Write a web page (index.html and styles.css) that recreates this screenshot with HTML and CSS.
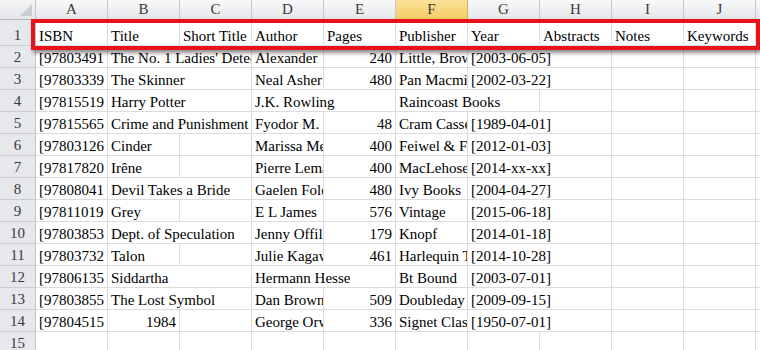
FILE: index.html
```html
<!DOCTYPE html>
<html>
<head>
<meta charset="utf-8">
<link rel="stylesheet" href="styles.css">
</head>
<body>
<div class="sheet">
  <div class="corner"><span class="tri"></span></div>
  <div class="ch">A</div><div class="ch">B</div><div class="ch">C</div><div class="ch">D</div><div class="ch">E</div><div class="ch sel">F</div><div class="ch">G</div><div class="ch">H</div><div class="ch">I</div><div class="ch">J</div><div class="ch"></div>

  <div class="rh">1</div>
  <div class="c">ISBN</div><div class="c">Title</div><div class="c">Short Title</div><div class="c">Author</div><div class="c">Pages</div><div class="c">Publisher</div><div class="c">Year</div><div class="c">Abstracts</div><div class="c">Notes</div><div class="c">Keywords</div><div class="c"></div>

  <div class="rh">2</div>
  <div class="c">[97803491</div><div class="c s2">The No. 1 Ladies' Detective Agency</div><div class="c">Alexander</div><div class="c num">240</div><div class="c">Little, Brown</div><div class="c s2">[2003-06-05]</div><div class="c"></div><div class="c"></div><div class="c"></div>

  <div class="rh">3</div>
  <div class="c">[97803339</div><div class="c s2">The Skinner</div><div class="c">Neal Asher</div><div class="c num">480</div><div class="c">Pan Macmillan</div><div class="c s2">[2002-03-22]</div><div class="c"></div><div class="c"></div><div class="c"></div>

  <div class="rh">4</div>
  <div class="c">[97815519</div><div class="c s2">Harry Potter</div><div class="c s2">J.K. Rowling</div><div class="c s2">Raincoast Books</div><div class="c"></div><div class="c"></div><div class="c"></div><div class="c"></div>

  <div class="rh">5</div>
  <div class="c">[97815565</div><div class="c s2">Crime and Punishment</div><div class="c">Fyodor M.</div><div class="c num">48</div><div class="c">Cram Cassettes</div><div class="c s2">[1989-04-01]</div><div class="c"></div><div class="c"></div><div class="c"></div>

  <div class="rh">6</div>
  <div class="c">[97803126</div><div class="c">Cinder</div><div class="c"></div><div class="c">Marissa Meyer</div><div class="c num">400</div><div class="c">Feiwel &amp; Friends</div><div class="c s2">[2012-01-03]</div><div class="c"></div><div class="c"></div><div class="c"></div>

  <div class="rh">7</div>
  <div class="c">[97817820</div><div class="c">Irêne</div><div class="c"></div><div class="c">Pierre Lemaitre</div><div class="c num">400</div><div class="c">MacLehose Press</div><div class="c s2">[2014-xx-xx]</div><div class="c"></div><div class="c"></div><div class="c"></div>

  <div class="rh">8</div>
  <div class="c">[97808041</div><div class="c s2">Devil Takes a Bride</div><div class="c">Gaelen Foley</div><div class="c num">480</div><div class="c">Ivy Books</div><div class="c s2">[2004-04-27]</div><div class="c"></div><div class="c"></div><div class="c"></div>

  <div class="rh">9</div>
  <div class="c">[97811019</div><div class="c">Grey</div><div class="c"></div><div class="c">E L James</div><div class="c num">576</div><div class="c">Vintage</div><div class="c s2">[2015-06-18]</div><div class="c"></div><div class="c"></div><div class="c"></div>

  <div class="rh">10</div>
  <div class="c">[97803853</div><div class="c s2">Dept. of Speculation</div><div class="c">Jenny Offill</div><div class="c num">179</div><div class="c">Knopf</div><div class="c s2">[2014-01-18]</div><div class="c"></div><div class="c"></div><div class="c"></div>

  <div class="rh">11</div>
  <div class="c">[97803732</div><div class="c">Talon</div><div class="c"></div><div class="c">Julie Kagawa</div><div class="c num">461</div><div class="c">Harlequin Teen</div><div class="c s2">[2014-10-28]</div><div class="c"></div><div class="c"></div><div class="c"></div>

  <div class="rh">12</div>
  <div class="c">[97806135</div><div class="c s2">Siddartha</div><div class="c s2">Hermann Hesse</div><div class="c">Bt Bound</div><div class="c s2">[2003-07-01]</div><div class="c"></div><div class="c"></div><div class="c"></div>

  <div class="rh">13</div>
  <div class="c">[97803855</div><div class="c s2">The Lost Symbol</div><div class="c">Dan Brown</div><div class="c num">509</div><div class="c">Doubleday</div><div class="c s2">[2009-09-15]</div><div class="c"></div><div class="c"></div><div class="c"></div>

  <div class="rh">14</div>
  <div class="c">[97804515</div><div class="c num">1984</div><div class="c"></div><div class="c">George Orwell</div><div class="c num">336</div><div class="c">Signet Classics</div><div class="c s2">[1950-07-01]</div><div class="c"></div><div class="c"></div><div class="c"></div>

  <div class="rh">15</div>
  <div class="c"></div><div class="c"></div><div class="c"></div><div class="c"></div><div class="c"></div><div class="c"></div><div class="c"></div><div class="c"></div><div class="c"></div><div class="c"></div><div class="c"></div>

  <div class="highlight"></div>
</div>
</body>
</html>
```

FILE: styles.css
```css
html, body {
  margin: 0;
  padding: 0;
  background: #ffffff;
  overflow: hidden;
}

.sheet {
  position: relative;
  width: 760px;
  height: 350px;
  overflow: hidden;
  display: grid;
  grid-template-columns: 36px repeat(10, 72px) 1fr;
  grid-template-rows: 20px 26px repeat(14, 22px);
  font-family: "Liberation Serif", "Times New Roman", serif;
  font-size: 15px;
  color: #000;
}

.corner {
  position: relative;
  background: linear-gradient(#f4f5f6, #e3e5e8);
  border-right: 1px solid #c3c6ca;
  border-bottom: 1px solid #b9bdc3;
  box-sizing: border-box;
}

.tri {
  position: absolute;
  right: 3px;
  bottom: 3px;
  width: 0;
  height: 0;
  border-left: 12px solid transparent;
  border-bottom: 12px solid #c9ccd0;
}

.ch {
  box-sizing: border-box;
  background: linear-gradient(#f8f9fa, #e4e6e9);
  border-right: 1px solid #c6c9cd;
  border-bottom: 1px solid #b9bdc3;
  text-align: center;
  line-height: 18px;
  color: #3b3b3b;
  font-size: 15px;
}

.ch.sel {
  background: linear-gradient(#fbe29a, #f4cc66);
  border-right-color: #e2b04a;
  border-bottom-color: #d99f3c;
}

.rh {
  box-sizing: border-box;
  background: #e6e8eb;
  border-right: 1px solid #bfc3c8;
  border-bottom: 1px solid #c9ccd1;
  display: flex;
  align-items: flex-end;
  justify-content: center;
  line-height: 18px;
  padding-bottom: 1px;
  color: #3b3b3b;
  font-size: 15px;
}

.c {
  box-sizing: border-box;
  border-right: 1px solid #dadcdd;
  border-bottom: 1px solid #dadcdd;
  padding: 0 2px 0 3px;
  white-space: nowrap;
  overflow: hidden;
  display: flex;
  align-items: flex-end;
  line-height: 18px;
}

.c.num {
  justify-content: flex-end;
  padding-right: 3px;
}

.s2 {
  grid-column: span 2;
}

.highlight {
  position: absolute;
  left: 31px;
  top: 19px;
  width: 729px;
  height: 31px;
  box-sizing: border-box;
  border: 4px solid #e8121a;
  box-shadow: 2px 3px 4px rgba(0, 0, 0, 0.45);
  pointer-events: none;
}
```
